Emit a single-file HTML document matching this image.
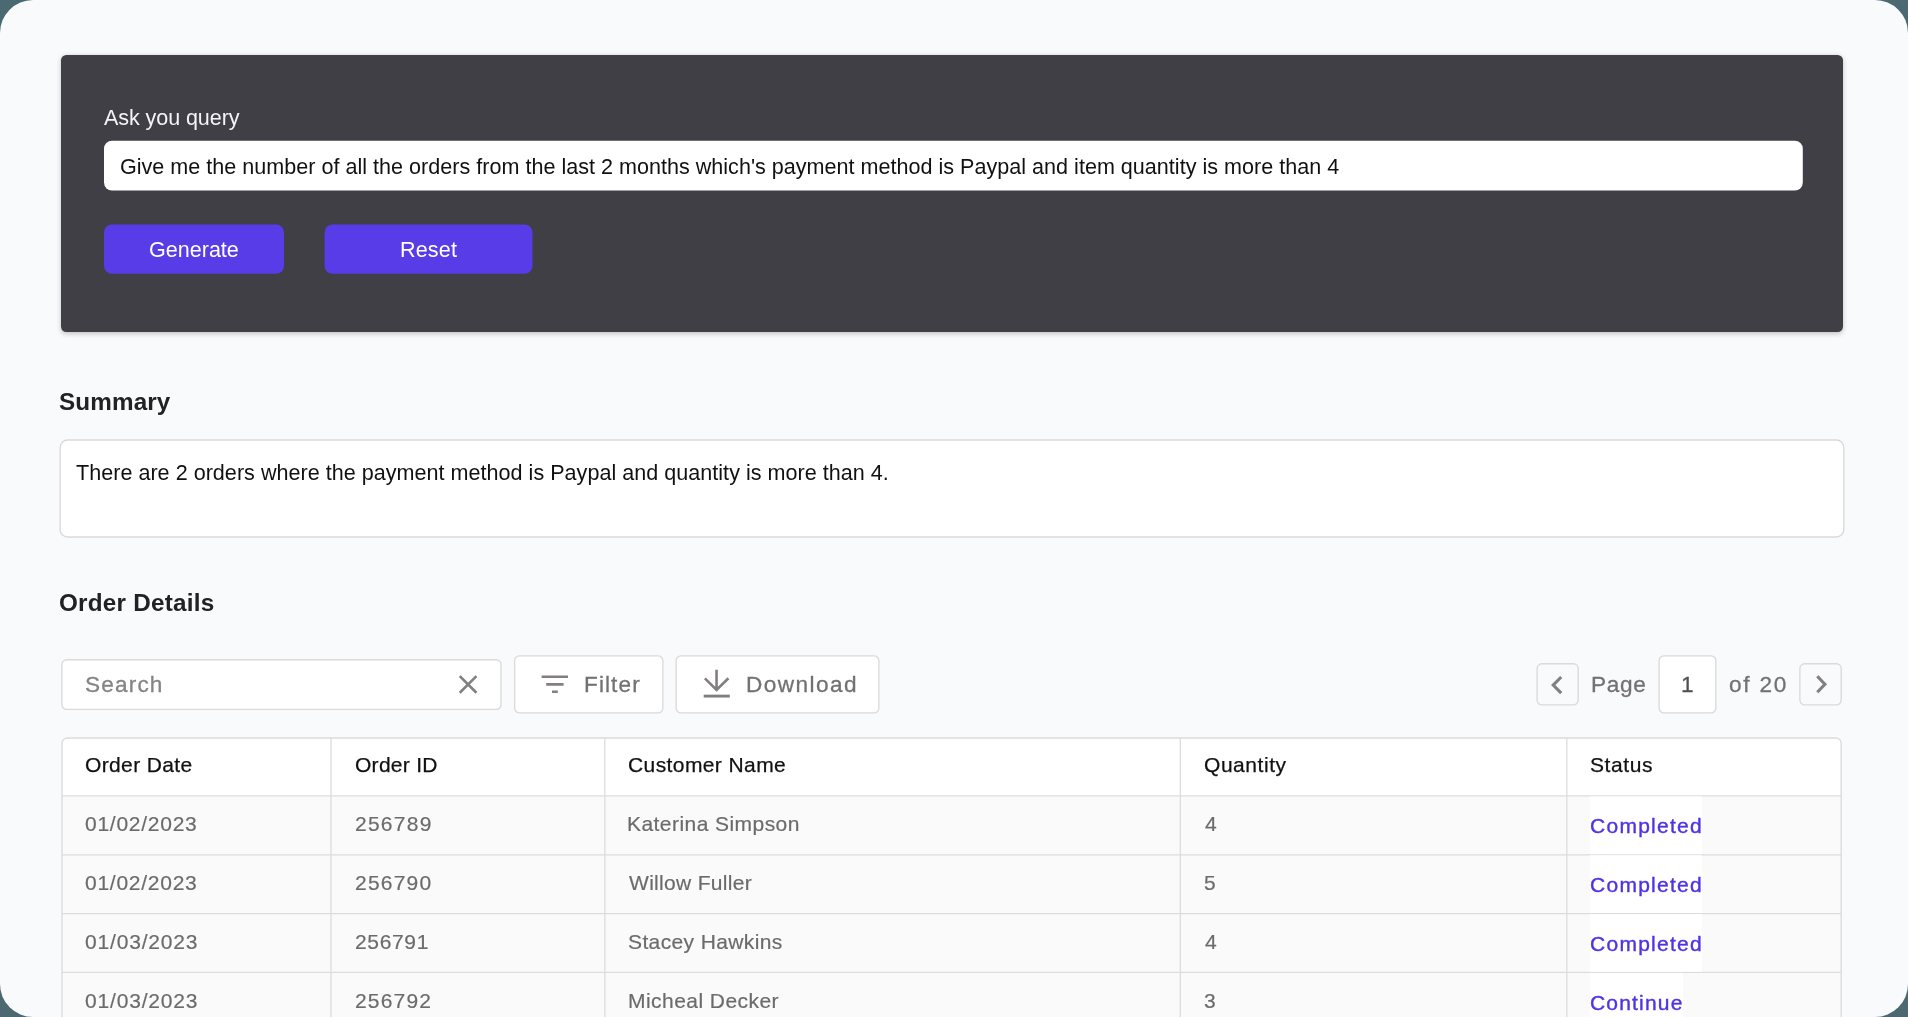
<!DOCTYPE html>
<html lang="en"><head><meta charset="utf-8"><title>Order Query</title>
<style>
html,body{margin:0;padding:0}
body{width:1908px;height:1017px;overflow:hidden;background:#4c6870;font-family:"Liberation Sans",sans-serif;}
#app{position:absolute;left:0;top:0;width:1908px;height:1017px;border-radius:33px;background:#f9fafc;overflow:hidden}
.t{position:absolute;white-space:nowrap;margin:0;padding:0;will-change:transform}
.abs{position:absolute;box-sizing:border-box}
.panel{left:61px;top:55px;width:1782px;height:277px;background:#403f46;border-radius:5.4px;box-shadow:0 1.35px 5.4px rgba(0,0,0,.22)}
.qinput{left:104px;top:141px;width:1699px;height:49.5px;background:#fff;border-radius:8px}
.btn{background:#573ce8;border-radius:8px;height:49px;top:224.5px}
.card{background:#fff;border:1px solid #dcdcdc;border-radius:7px}
.ghost{border:1px solid #dcdcdc;border-radius:7px}
svg{position:absolute;overflow:visible}
</style></head><body><div id="app">

<section class="abs panel"></section>
<div class="t" style="left:104.46px;top:105.03px;font-size:21.56px;line-height:26px;color:#f4f4f5;letter-spacing:-0.086px;font-weight:normal;">Ask you query</div>
<svg style="left:0;top:0" width="1908" height="1017" viewBox="0 0 1908 1017"><rect x="104" y="140.75" width="1698.8" height="49.75" rx="8" fill="#fff"/><rect x="104" y="224.5" width="180" height="49.25" rx="8" fill="#573ce8"/><rect x="324.6" y="224.5" width="207.9" height="49.25" rx="8" fill="#573ce8"/></svg>
<div class="t" style="left:120.42px;top:153.78px;font-size:21.56px;line-height:26px;color:#111;letter-spacing:0.015px;font-weight:normal;">Give me the number of all the orders from the last 2 months which's payment method is Paypal and item quantity is more than 4</div>
<div class="t" style="left:149.19px;top:236.53px;font-size:21.56px;line-height:26px;color:#fff;letter-spacing:0.000px;font-weight:normal;">Generate</div>
<div class="t" style="left:399.98px;top:236.53px;font-size:21.56px;line-height:26px;color:#fff;letter-spacing:0.151px;font-weight:normal;">Reset</div>
<svg style="left:0;top:0" width="1908" height="1017" viewBox="0 0 1908 1017"><rect x="60.1" y="440.0" width="1783.70" height="97.00" rx="7.5" fill="#fff" stroke="#dadada" stroke-width="1.35"/><rect x="61.9" y="659.7" width="439.10" height="49.70" rx="4.8" fill="#fff" stroke="#dadada" stroke-width="1.35"/><rect x="514.65" y="655.9" width="148.25" height="57.00" rx="4.8" fill="#fff" stroke="#dadada" stroke-width="1.35"/><rect x="676.1" y="655.9" width="202.80" height="57.00" rx="4.8" fill="#fff" stroke="#dadada" stroke-width="1.35"/><rect x="1537.1" y="663.7" width="41.10" height="41.20" rx="4.8" fill="none" stroke="#dadada" stroke-width="1.35"/><rect x="1659.1" y="655.9" width="56.75" height="57.00" rx="4.8" fill="#fff" stroke="#dadada" stroke-width="1.35"/><rect x="1799.9" y="663.7" width="41.30" height="41.20" rx="4.8" fill="none" stroke="#dadada" stroke-width="1.35"/></svg>
<h2 class="t" style="left:59.30px;top:387.10px;font-size:24.25px;line-height:29px;color:#222;letter-spacing:0.134px;font-weight:bold;">Summary</h2>
<div class="t" style="left:76.27px;top:459.53px;font-size:21.56px;line-height:26px;color:#111;letter-spacing:0.024px;font-weight:normal;">There are 2 orders where the payment method is Paypal and quantity is more than 4.</div>
<h2 class="t" style="left:59.01px;top:587.85px;font-size:24.25px;line-height:29px;color:#222;letter-spacing:0.249px;font-weight:bold;">Order Details</h2>
<div class="t" style="left:84.62px;top:671.42px;font-size:22.6px;line-height:27px;color:#858383;letter-spacing:1.167px;font-weight:normal;-webkit-text-stroke:0.3px #858383;">Search</div>
<svg style="left:0;top:0" width="1908" height="1017" viewBox="0 0 1908 1017"><path d="M459.77 676.12L476.43 692.78M476.43 676.12L459.77 692.78" stroke="#827f7f" stroke-width="2.6" fill="none"/></svg>
<div class="t" style="left:584.05px;top:671.42px;font-size:22.6px;line-height:27px;color:#737171;letter-spacing:1.092px;font-weight:normal;-webkit-text-stroke:0.3px #737171;">Filter</div>
<div class="t" style="left:745.80px;top:671.42px;font-size:22.6px;line-height:27px;color:#737171;letter-spacing:1.429px;font-weight:normal;-webkit-text-stroke:0.3px #737171;">Download</div>
<svg style="left:0;top:0" width="1908" height="1017" viewBox="0 0 1908 1017"><path d="M541.6 676.8H568M546.2 684.4H563.6M552 691.7H557.8" stroke="#827f7f" stroke-width="2.6" fill="none"/><path d="M716.55 669.7V689.5M704.9 678.3L716.55 690.0L728.4 678.3" stroke="#827f7f" stroke-width="2.6" fill="none"/><path d="M703.7 696.1H729.8" stroke="#827f7f" stroke-width="2.9" fill="none"/></svg>
<svg style="left:0;top:0" width="1908" height="1017" viewBox="0 0 1908 1017"><path d="M1561.2 677L1553.2 685.05L1561.2 693.1" stroke="#827f7f" stroke-width="3.1" fill="none"/></svg>
<div class="t" style="left:1590.90px;top:671.42px;font-size:22.6px;line-height:27px;color:#737171;letter-spacing:0.659px;font-weight:normal;-webkit-text-stroke:0.3px #737171;">Page</div>
<div class="t" style="left:1681.01px;top:671.42px;font-size:22.6px;line-height:27px;color:#505050;letter-spacing:0.000px;font-weight:normal;-webkit-text-stroke:0.3px #505050;">1</div>
<div class="t" style="left:1729.00px;top:671.42px;font-size:22.6px;line-height:27px;color:#737171;letter-spacing:1.767px;font-weight:normal;-webkit-text-stroke:0.3px #737171;">of 20</div>
<svg style="left:0;top:0" width="1908" height="1017" viewBox="0 0 1908 1017"><path d="M1817.3 676.3L1824.9 684.3L1817.3 692.3" stroke="#827f7f" stroke-width="3.1" fill="none"/></svg>
<svg style="left:0;top:0" width="1908" height="1017" viewBox="0 0 1908 1017"><defs><clipPath id="tc"><rect x="62.0" y="738.0" width="1779.2" height="299.0" rx="6"/></clipPath></defs><g clip-path="url(#tc)"><rect x="62.0" y="738.0" width="1779.2" height="57.950000000000045" fill="#fff"/><rect x="62.0" y="795.95" width="1779.2" height="299.0" fill="#fafafa"/></g><path d="M62.0 795.95H1841.2" stroke="#dcdcdc" stroke-width="1.3"/><path d="M62.0 854.7800000000001H1841.2" stroke="#dcdcdc" stroke-width="1.3"/><path d="M62.0 913.61H1841.2" stroke="#dcdcdc" stroke-width="1.3"/><path d="M62.0 972.44H1841.2" stroke="#dcdcdc" stroke-width="1.3"/><path d="M331.0 738.0V1037" stroke="#dcdcdc" stroke-width="1.3"/><path d="M604.8 738.0V1037" stroke="#dcdcdc" stroke-width="1.3"/><path d="M1180.3 738.0V1037" stroke="#dcdcdc" stroke-width="1.3"/><path d="M1566.8 738.0V1037" stroke="#dcdcdc" stroke-width="1.3"/><rect x="1589.8" y="796.45" width="112.3" height="57.63" fill="#fff"/><rect x="1589.8" y="855.28" width="112.3" height="57.63" fill="#fff"/><rect x="1589.8" y="914.11" width="112.3" height="57.63" fill="#fff"/><rect x="1589.8" y="972.94" width="93.2" height="57.63" fill="#fff"/><rect x="62.0" y="738.0" width="1779.2" height="299.0" rx="5.5" fill="none" stroke="#dcdcdc" stroke-width="1.4"/></svg>
<div class="t" style="left:84.63px;top:751.82px;font-size:21.0px;line-height:25px;color:#111;letter-spacing:0.367px;font-weight:normal;-webkit-text-stroke:0.25px #111;">Order Date</div>
<div class="t" style="left:354.63px;top:751.82px;font-size:21.0px;line-height:25px;color:#111;letter-spacing:0.284px;font-weight:normal;-webkit-text-stroke:0.25px #111;">Order ID</div>
<div class="t" style="left:628.06px;top:751.82px;font-size:21.0px;line-height:25px;color:#111;letter-spacing:0.406px;font-weight:normal;-webkit-text-stroke:0.25px #111;">Customer Name</div>
<div class="t" style="left:1204.13px;top:751.82px;font-size:21.0px;line-height:25px;color:#111;letter-spacing:0.547px;font-weight:normal;-webkit-text-stroke:0.25px #111;">Quantity</div>
<div class="t" style="left:1590.37px;top:751.82px;font-size:21.0px;line-height:25px;color:#111;letter-spacing:0.606px;font-weight:normal;-webkit-text-stroke:0.25px #111;">Status</div>
<div class="t" style="left:84.78px;top:811.22px;font-size:21.0px;line-height:25px;color:#6c6b6b;letter-spacing:0.738px;font-weight:normal;-webkit-text-stroke:0.2px #6c6b6b;">01/02/2023</div>
<div class="t" style="left:354.54px;top:811.22px;font-size:21.0px;line-height:25px;color:#6c6b6b;letter-spacing:1.255px;font-weight:normal;-webkit-text-stroke:0.2px #6c6b6b;">256789</div>
<div class="t" style="left:627.38px;top:811.22px;font-size:21.0px;line-height:25px;color:#6c6b6b;letter-spacing:0.442px;font-weight:normal;-webkit-text-stroke:0.2px #6c6b6b;">Katerina Simpson</div>
<div class="t" style="left:1204.52px;top:811.22px;font-size:21.0px;line-height:25px;color:#6c6b6b;letter-spacing:0.000px;font-weight:normal;-webkit-text-stroke:0.2px #6c6b6b;">4</div>
<div class="t" style="left:1590.33px;top:813.22px;font-size:21.0px;line-height:25px;color:#4e33e6;letter-spacing:1.271px;font-weight:normal;-webkit-text-stroke:0.4px #4e33e6;">Completed</div>
<div class="t" style="left:84.78px;top:870.05px;font-size:21.0px;line-height:25px;color:#6c6b6b;letter-spacing:0.743px;font-weight:normal;-webkit-text-stroke:0.2px #6c6b6b;">01/02/2023</div>
<div class="t" style="left:354.54px;top:870.05px;font-size:21.0px;line-height:25px;color:#6c6b6b;letter-spacing:1.220px;font-weight:normal;-webkit-text-stroke:0.2px #6c6b6b;">256790</div>
<div class="t" style="left:629.01px;top:870.05px;font-size:21.0px;line-height:25px;color:#6c6b6b;letter-spacing:0.311px;font-weight:normal;-webkit-text-stroke:0.2px #6c6b6b;">Willow Fuller</div>
<div class="t" style="left:1204.16px;top:870.05px;font-size:21.0px;line-height:25px;color:#6c6b6b;letter-spacing:0.000px;font-weight:normal;-webkit-text-stroke:0.2px #6c6b6b;">5</div>
<div class="t" style="left:1590.33px;top:872.05px;font-size:21.0px;line-height:25px;color:#4e33e6;letter-spacing:1.271px;font-weight:normal;-webkit-text-stroke:0.4px #4e33e6;">Completed</div>
<div class="t" style="left:84.78px;top:928.88px;font-size:21.0px;line-height:25px;color:#6c6b6b;letter-spacing:0.827px;font-weight:normal;-webkit-text-stroke:0.2px #6c6b6b;">01/03/2023</div>
<div class="t" style="left:354.54px;top:928.88px;font-size:21.0px;line-height:25px;color:#6c6b6b;letter-spacing:0.661px;font-weight:normal;-webkit-text-stroke:0.2px #6c6b6b;">256791</div>
<div class="t" style="left:628.15px;top:928.88px;font-size:21.0px;line-height:25px;color:#6c6b6b;letter-spacing:0.375px;font-weight:normal;-webkit-text-stroke:0.2px #6c6b6b;">Stacey Hawkins</div>
<div class="t" style="left:1204.52px;top:928.88px;font-size:21.0px;line-height:25px;color:#6c6b6b;letter-spacing:0.000px;font-weight:normal;-webkit-text-stroke:0.2px #6c6b6b;">4</div>
<div class="t" style="left:1590.33px;top:930.88px;font-size:21.0px;line-height:25px;color:#4e33e6;letter-spacing:1.271px;font-weight:normal;-webkit-text-stroke:0.4px #4e33e6;">Completed</div>
<div class="t" style="left:84.78px;top:987.71px;font-size:21.0px;line-height:25px;color:#6c6b6b;letter-spacing:0.827px;font-weight:normal;-webkit-text-stroke:0.2px #6c6b6b;">01/03/2023</div>
<div class="t" style="left:354.54px;top:987.71px;font-size:21.0px;line-height:25px;color:#6c6b6b;letter-spacing:1.167px;font-weight:normal;-webkit-text-stroke:0.2px #6c6b6b;">256792</div>
<div class="t" style="left:627.88px;top:987.71px;font-size:21.0px;line-height:25px;color:#6c6b6b;letter-spacing:0.454px;font-weight:normal;-webkit-text-stroke:0.2px #6c6b6b;">Micheal Decker</div>
<div class="t" style="left:1204.20px;top:987.71px;font-size:21.0px;line-height:25px;color:#6c6b6b;letter-spacing:0.000px;font-weight:normal;-webkit-text-stroke:0.2px #6c6b6b;">3</div>
<div class="t" style="left:1590.33px;top:989.71px;font-size:21.0px;line-height:25px;color:#4e33e6;letter-spacing:1.191px;font-weight:normal;-webkit-text-stroke:0.4px #4e33e6;">Continue</div>
</div></body></html>
